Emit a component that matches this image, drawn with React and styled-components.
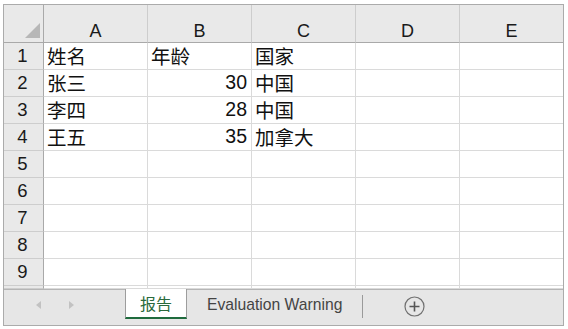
import styled, { createGlobalStyle } from "styled-components";

const GlobalStyle = createGlobalStyle`
  body {
    margin: 0;
    background: #ffffff;
    font-family: "Liberation Sans", "Noto Sans CJK SC", sans-serif;
  }
`;

const Frame = styled.div`
  box-sizing: border-box;
  width: 561px;
  height: 322px;
  margin: 4px 0 0 3px;
  border: 1px solid #ababab;
  display: flex;
  flex-direction: column;
  background: #fff;
`;

const Sheet = styled.div`
  display: grid;
  grid-template-columns: 40px repeat(4, 104px) 103px;
  grid-template-rows: 38px repeat(9, 27px) 3px;
  overflow: hidden;
`;

const Cell = styled.div`
  box-sizing: border-box;
  display: flex;
  align-items: center;
  justify-content: ${(p) => (p.$right ? "flex-end" : "flex-start")};
  padding: 0 4px 1px 3px;
  border-right: ${(p) => (p.$last ? "none" : "1px solid #dadada")};
  border-bottom: 1px solid #dadada;
  font-size: 19.5px;
  color: #111;
  white-space: nowrap;
  overflow: hidden;
`;

const ColHead = styled.div`
  box-sizing: border-box;
  display: flex;
  align-items: flex-end;
  justify-content: center;
  padding-bottom: 1px;
  line-height: 20px;
  background: #e9e9e9;
  border-right: ${(p) => (p.$last ? "none" : "1px solid #cdcdcd")};
  border-bottom: 1px solid #a9a9a9;
  font-size: 18px;
  color: #1a1a1a;
`;

const RowHead = styled.div`
  box-sizing: border-box;
  display: flex;
  align-items: center;
  justify-content: center;
  padding: 0 2px 1px 0;
  background: #e9e9e9;
  border-right: 1px solid #a9a9a9;
  border-bottom: 1px solid #cdcdcd;
  font-size: 18.5px;
  color: #1a1a1a;
`;

const Corner = styled(ColHead)`
  border-right: 1px solid #a9a9a9;
  justify-content: flex-end;
  padding: 0 3px 4px 0;
`;

const Triangle = styled.div`
  width: 15px;
  height: 15px;
  background: #b7b7b7;
  clip-path: polygon(100% 0, 100% 100%, 0 100%);
`;

const TabBar = styled.div`
  box-sizing: border-box;
  height: 36px;
  display: flex;
  align-items: flex-start;
  background: #e6e6e6;
  border-top: 1px solid #b5b5b5;
`;

const Nav = styled.div`
  width: 121px;
  height: 30px;
  display: flex;
  align-items: center;
  padding-left: 32px;
  gap: 28px;
  box-sizing: border-box;
`;

const Arrow = styled.div`
  width: 0;
  height: 0;
  border-top: 4px solid transparent;
  border-bottom: 4px solid transparent;
  ${(p) =>
    p.$dir === "left"
      ? "border-right: 5px solid #c2c2c2;"
      : "border-left: 5px solid #c2c2c2;"}
`;

const ActiveTab = styled.div`
  box-sizing: border-box;
  width: 62px;
  height: 30px;
  margin-top: -1px;
  display: flex;
  align-items: center;
  justify-content: center;
  background: #fff;
  border-left: 1px solid #9d9d9d;
  border-right: 1px solid #9d9d9d;
  border-bottom: 2px solid #1f6b3d;
  font-size: 16px;
  color: #2a6a3c;
`;

const Tab = styled.div`
  height: 30px;
  display: flex;
  align-items: center;
  padding: 0 20px;
  font-size: 15.7px;
  color: #444;
`;

const Divider = styled.div`
  width: 1px;
  height: 23px;
  margin-top: 5px;
  background: #9a9a9a;
`;

const AddButton = styled.div`
  margin: 6px 0 0 41px;
  width: 21px;
  height: 21px;
  display: flex;
`;

const columns = ["A", "B", "C", "D", "E"];

const rows = [
  ["姓名", "年龄", "国家"],
  ["张三", 30, "中国"],
  ["李四", 28, "中国"],
  ["王五", 35, "加拿大"],
  [],
  [],
  [],
  [],
  [],
  [],
];

export default function App() {
  return (
    <>
      <GlobalStyle />
      <Frame>
        <Sheet>
          <Corner>
            <Triangle />
          </Corner>
          {columns.map((c, i) => (
            <ColHead key={c} $last={i === columns.length - 1}>
              {c}
            </ColHead>
          ))}
          {rows.map((row, r) => [
            <RowHead key={"h" + r}>{r < 9 ? r + 1 : ""}</RowHead>,
            ...columns.map((c, i) => {
              const v = row[i];
              return (
                <Cell
                  key={r + c}
                  $right={typeof v === "number"}
                  $last={i === columns.length - 1}
                >
                  {v}
                </Cell>
              );
            }),
          ])}
        </Sheet>
        <TabBar>
          <Nav>
            <Arrow $dir="left" />
            <Arrow $dir="right" />
          </Nav>
          <ActiveTab>报告</ActiveTab>
          <Tab>Evaluation Warning</Tab>
          <Divider />
          <AddButton>
            <svg width="21" height="21" viewBox="0 0 21 21">
              <circle cx="10.5" cy="10.5" r="9.5" fill="none" stroke="#707070" strokeWidth="1.2" />
              <path d="M10.5 5.5v10M5.5 10.5h10" stroke="#555" strokeWidth="1.6" />
            </svg>
          </AddButton>
        </TabBar>
      </Frame>
    </>
  );
}
